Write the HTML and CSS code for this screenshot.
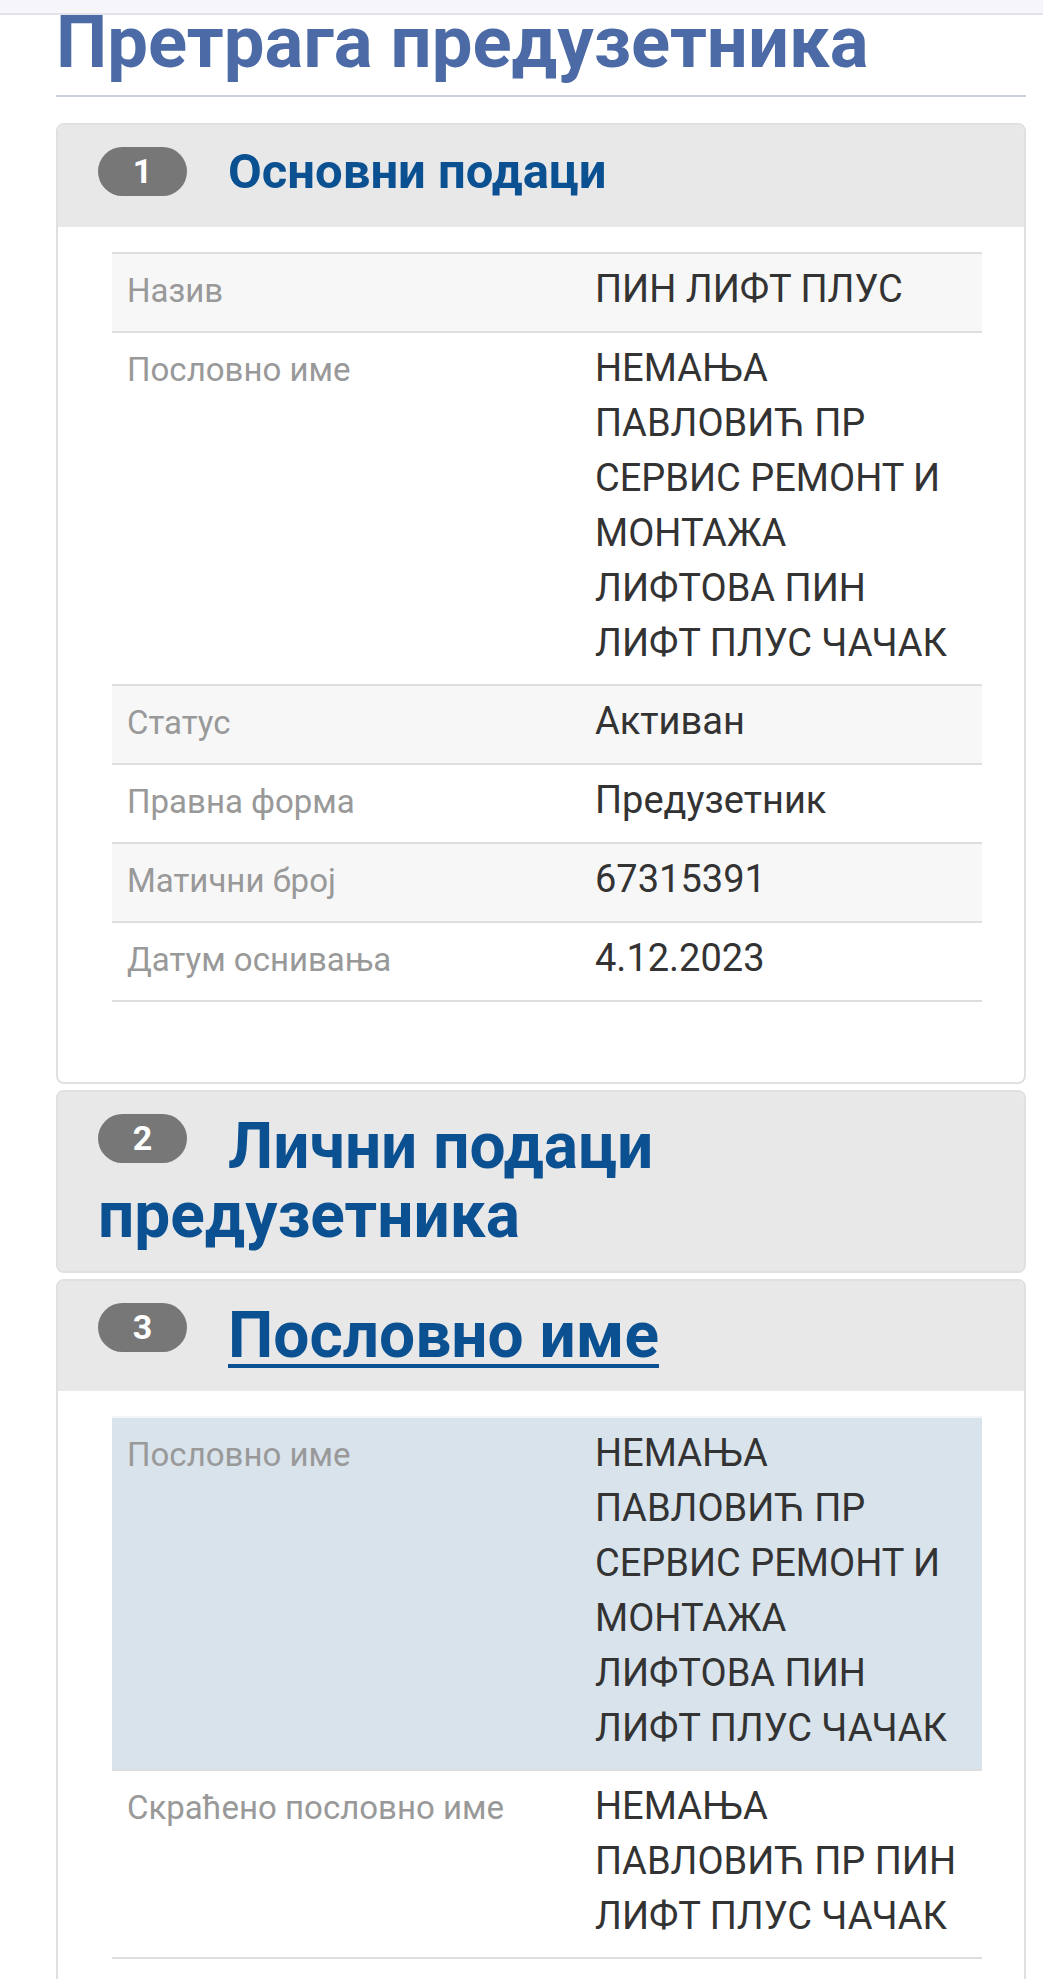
FILE: index.html
```html
<!DOCTYPE html>
<html lang="sr">

<head>
    <meta charset="UTF-8">
    <meta name="viewport" content="width=device-width, initial-scale=1.0">
    <title>Претрага предузетника</title>
    <link rel="stylesheet" href="styles.css">
</head>

<body>
    <div class="topbar"></div>

    <div class="page">
        <h1 class="page-title">Претрага предузетника</h1>

        <!-- 1: basic data -->
        <section class="panel">
            <div class="panel-heading compact">
                <span class="step">1</span><span class="panel-title small">Основни подаци</span>
            </div>
            <div class="panel-body">
                <table class="details">
                    <tr class="striped">
                        <td class="label">Назив</td>
                        <td class="value">ПИН ЛИФТ ПЛУС</td>
                    </tr>
                    <tr>
                        <td class="label">Пословно име</td>
                        <td class="value">НЕМАЊА ПАВЛОВИЋ ПР СЕРВИС РЕМОНТ И МОНТАЖА ЛИФТОВА ПИН ЛИФТ ПЛУС ЧАЧАК</td>
                    </tr>
                    <tr class="striped">
                        <td class="label">Статус</td>
                        <td class="value">Активан</td>
                    </tr>
                    <tr>
                        <td class="label">Правна форма</td>
                        <td class="value">Предузетник</td>
                    </tr>
                    <tr class="striped">
                        <td class="label">Матични број</td>
                        <td class="value">67315391</td>
                    </tr>
                    <tr>
                        <td class="label">Датум оснивања</td>
                        <td class="value">4.12.2023</td>
                    </tr>
                </table>
            </div>
        </section>

        <!-- 2: collapsed -->
        <section class="panel">
            <div class="panel-heading">
                <span class="step">2</span><span class="panel-title">Лични подаци предузетника</span>
            </div>
        </section>

        <!-- 3: business name -->
        <section class="panel">
            <div class="panel-heading">
                <span class="step">3</span><a href="#" class="panel-title active">Пословно име</a>
            </div>
            <div class="panel-body">
                <table class="details">
                    <tr class="highlight">
                        <td class="label">Пословно име</td>
                        <td class="value">НЕМАЊА ПАВЛОВИЋ ПР СЕРВИС РЕМОНТ И МОНТАЖА ЛИФТОВА ПИН ЛИФТ ПЛУС ЧАЧАК</td>
                    </tr>
                    <tr>
                        <td class="label">Скраћено пословно име</td>
                        <td class="value">НЕМАЊА ПАВЛОВИЋ ПР ПИН ЛИФТ ПЛУС ЧАЧАК</td>
                    </tr>
                </table>
            </div>
        </section>
    </div>
</body>
</html>
```

FILE: styles.css
```css
body {
    margin: 0;
    background: #fff;
    font-family: Roboto, "Liberation Sans", Arial, sans-serif;
    color: #333;
}

.topbar {
    height: 13px;
    background: #f5f5fa;
    border-bottom: 2px solid #e2e2ea;
}

.page {
    width: 970px;
    margin-left: 56px;
}

.page-title {
    margin: 0 0 26px;
    padding-bottom: 24px;
    font-size: 72.5px;
    line-height: 56px;
    font-weight: 700;
    color: #4c6aa6;
    border-bottom: 2px solid #cbd2de;
}

.panel {
    margin-bottom: 6px;
    background: #fff;
    border: 2px solid #e0e0e0;
    border-radius: 8px;
    overflow: hidden;
}

.panel-heading {
    padding: 20px 30px 21px 40px;
    background: #e8e8e8;
}

.panel-heading.compact {
    padding-bottom: 28px;
}

.step {
    display: inline-block;
    vertical-align: top;
    width: 89px;
    height: 49px;
    margin: 2px 41px 0 0;
    border-radius: 25px;
    background: #777;
    color: #fff;
    font-size: 34px;
    line-height: 49px;
    font-weight: 700;
    text-align: center;
}

.panel-title {
    font-size: 64px;
    line-height: 69px;
    font-weight: 700;
    color: #0b5192;
    text-decoration: none;
}

.panel-title.small {
    font-size: 49px;
    line-height: 54px;
}

.panel-title.active {
    text-decoration: underline;
    text-decoration-thickness: 4px;
    text-underline-offset: 7px;
}

.panel-body {
    padding: 25px 42px 80px 54px;
}

.details {
    width: 100%;
    border-collapse: collapse;
    table-layout: fixed;
}

.details td {
    padding: 8px 15px 13px;
    border-top: 2px solid #dedede;
    line-height: 55px;
    vertical-align: baseline;
}

.details tr:last-child td {
    border-bottom: 2px solid #dedede;
}

.details .label {
    width: 438px;
    font-size: 33px;
    color: #999;
}

.details .value {
    font-size: 38px;
    color: #333;
}

.details .striped td {
    background: #f7f7f7;
}

.details .highlight td {
    background: #d9e3ec;
    border-top-color: #f3f5f8;
}
```
